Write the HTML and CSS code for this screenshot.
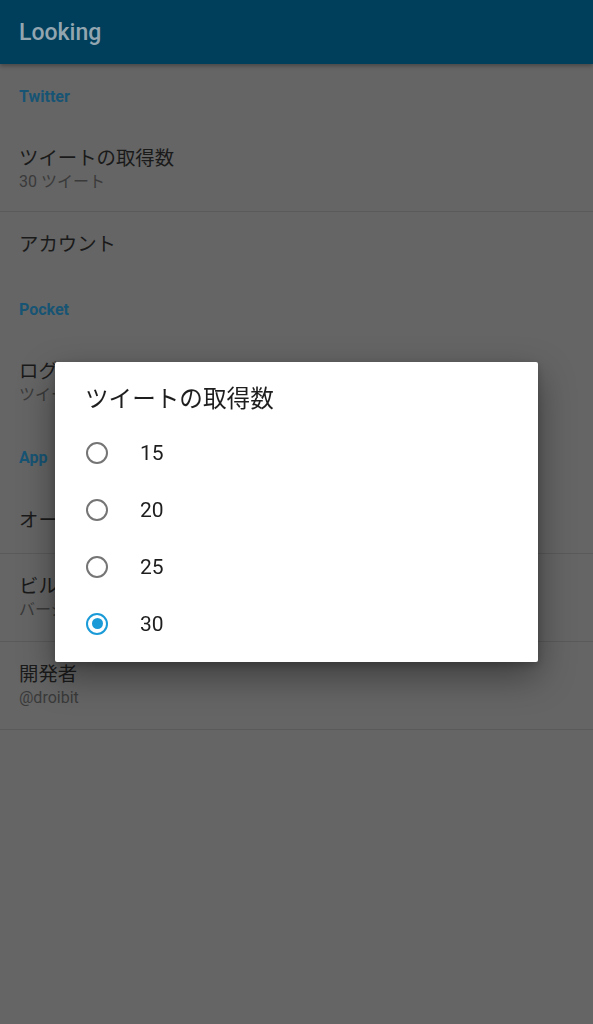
FILE: index.html
```html
<!DOCTYPE html>
<html lang="ja">
<head>
	<meta charset="UTF-8">
	<title>Looking</title>
	<link rel="stylesheet" href="styles.css">
</head>
<body>
	<div class="appbar">Looking</div>
	<div class="list">
		<div class="category">Twitter</div>
		<div class="item two first divided">
			<p class="title">ツイートの取得数</p>
			<p class="summary">30 ツイート</p>
		</div>
		<div class="item">
			<p class="title">アカウント</p>
		</div>
		<div class="category">Pocket</div>
		<div class="item two first">
			<p class="title">ログイン</p>
			<p class="summary">ツイート</p>
		</div>
		<div class="category">App</div>
		<div class="item divided">
			<p class="title">オープン</p>
		</div>
		<div class="item two divided">
			<p class="title">ビルド</p>
			<p class="summary">バージ</p>
		</div>
		<div class="item two divided">
			<p class="title">開発者</p>
			<p class="summary">@droibit</p>
		</div>
	</div>

	<div class="scrim">
		<div class="dialog">
			<p class="dialog-title">ツイートの取得数</p>
			<ul class="choices">
				<li><span class="radio"></span>15</li>
				<li><span class="radio"></span>20</li>
				<li><span class="radio"></span>25</li>
				<li><span class="radio checked"></span>30</li>
			</ul>
		</div>
	</div>
</body>
</html>
```

FILE: styles.css
```css
*{
	margin: 0;
	padding: 0;
	box-sizing: border-box;
}
ul{
	list-style: none;
}
body{
	width: 593px;
	height: 1024px;
	background: #656565;
	font-family: Roboto, "Noto Sans CJK JP", sans-serif;
	overflow: hidden;
}
.appbar{
	height: 64px;
	padding-left: 19px;
	display: flex;
	align-items: center;
	background: #003f5c;
	color: #93a6b0;
	font-size: 23px;
	font-weight: 500;
	box-shadow: 0 2px 4px rgba(0,0,0,.3);
	position: relative;
}
.category{
	height: 64px;
	padding-left: 19px;
	display: flex;
	align-items: center;
	color: #175474;
	font-size: 16px;
	font-weight: 700;
}
.item{
	height: 65px;
	padding-left: 19px;
	display: flex;
	flex-direction: column;
	justify-content: center;
}
.item.two{
	height: 88px;
}
.item.two.first{
	height: 84px;
}
.item.divided{
	border-bottom: 1px solid #5a5a5a;
}
.title{
	color: #1a1a1a;
	font-size: 19.4px;
	line-height: 24px;
}
.summary{
	color: #3a3a3a;
	font-size: 16px;
	line-height: 22px;
}
.scrim{
	position: fixed;
	top: 0;
	left: 0;
	right: 0;
	bottom: 0;
	display: flex;
	align-items: center;
	justify-content: center;
}
.dialog{
	width: 483px;
	height: 300px;
	background: #fff;
	border-radius: 2px;
	box-shadow: 0 14px 36px rgba(0,0,0,.4), 0 3px 8px rgba(0,0,0,.2);
	padding: 23px 0 10px;
}
.dialog-title{
	padding-left: 30px;
	color: #1e1e1e;
	font-size: 23.6px;
	line-height: 28px;
	margin-bottom: 11px;
}
.choices li{
	height: 57px;
	display: flex;
	align-items: center;
	padding-left: 31px;
	color: #1e1e1e;
	font-size: 21px;
}
.radio{
	width: 22px;
	height: 22px;
	border: 2px solid #757575;
	border-radius: 50%;
	margin-right: 32px;
	display: flex;
	align-items: center;
	justify-content: center;
}
.radio.checked{
	border-color: #1a9bd8;
}
.radio.checked::after{
	content: "";
	width: 11px;
	height: 11px;
	border-radius: 50%;
	background: #1a9bd8;
}
```
